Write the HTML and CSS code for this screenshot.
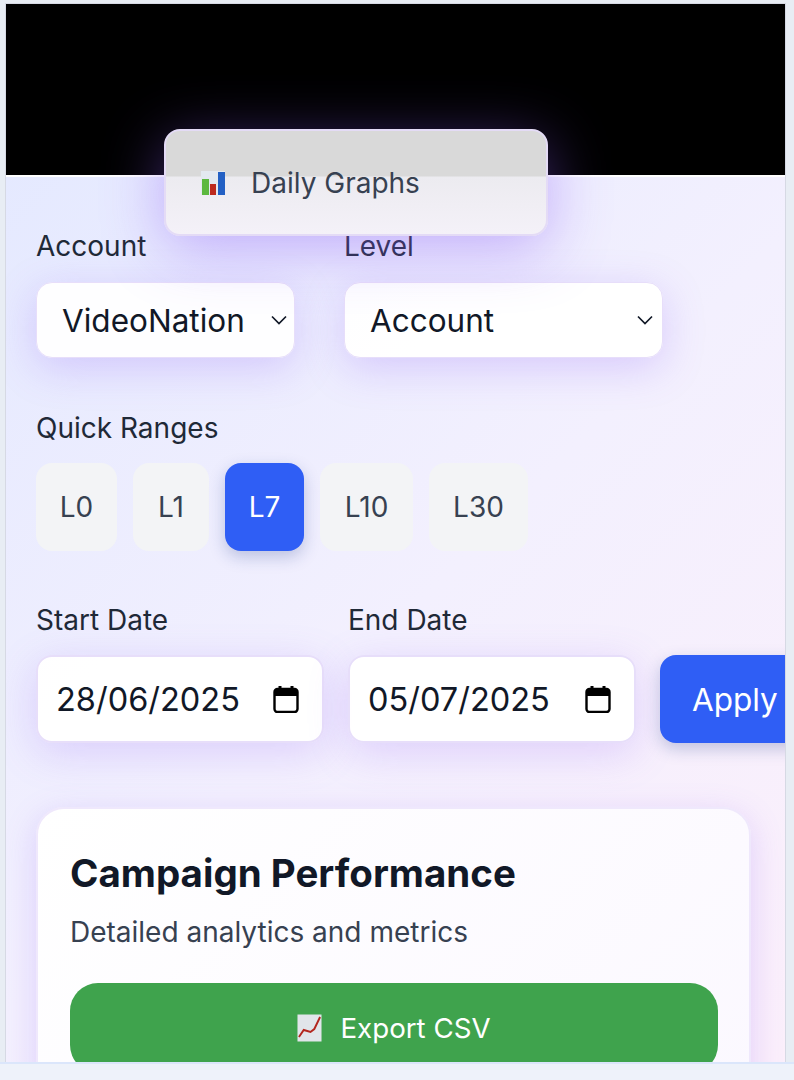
FILE: index.html
```html
<!doctype html>

<html lang="en">
<head>
  <meta charset="utf-8">
  <title>Campaign Performance</title>
  <link rel="stylesheet" href="styles.css">
</head>
<body>
<div class="frame">
  <div class="hero"></div>
  <div class="tab">
    <svg class="tab-icon" width="25" height="26" viewBox="0 0 25 26">
      <rect x="1" y="1" width="24" height="24" fill="#e3e9f0"/>
      <rect x="2" y="9" width="7" height="16" fill="#5cb83f"/>
      <rect x="10" y="14" width="6" height="11" fill="#bd2a1e"/>
      <rect x="18" y="2" width="7" height="23" fill="#2360c4"/>
    </svg>
    <span>Daily Graphs</span>
  </div>
  <div class="content">
    <div class="row row-top">
      <div class="field">
        <label class="label">Account</label>
        <div class="select select-account">
          <span>VideoNation</span>
          <svg width="18" height="10" viewBox="0 0 18 10"><path d="M2 1.5l7 7 7-7" fill="none" stroke="#111827" stroke-width="1.7"/></svg>
        </div>
      </div>
      <div class="field">
        <label class="label">Level</label>
        <div class="select select-level">
          <span>Account</span>
          <svg width="18" height="10" viewBox="0 0 18 10"><path d="M2 1.5l7 7 7-7" fill="none" stroke="#111827" stroke-width="1.7"/></svg>
        </div>
      </div>
    </div>

    <div class="ranges">
      <label class="label">Quick Ranges</label>
      <div class="range-list">
        <button class="range r0">L0</button>
        <button class="range r1">L1</button>
        <button class="range r7 active">L7</button>
        <button class="range r10">L10</button>
        <button class="range r30">L30</button>
      </div>
    </div>

    <div class="row row-dates">
      <div class="field">
        <label class="label">Start Date</label>
        <div class="date">
          <span>28/06/2025</span>
          <svg width="26" height="28" viewBox="0 0 26 28"><path d="M7 1v5M19 1v5" stroke="#000" stroke-width="3"/><rect x="1.5" y="4" width="23" height="23" rx="3" fill="#fff" stroke="#000" stroke-width="2.4"/><path d="M1.5 7a3 3 0 0 1 3-3h17a3 3 0 0 1 3 3v4h-23z" fill="#000"/></svg>
        </div>
      </div>
      <div class="field">
        <label class="label">End Date</label>
        <div class="date">
          <span>05/07/2025</span>
          <svg width="26" height="28" viewBox="0 0 26 28"><path d="M7 1v5M19 1v5" stroke="#000" stroke-width="3"/><rect x="1.5" y="4" width="23" height="23" rx="3" fill="#fff" stroke="#000" stroke-width="2.4"/><path d="M1.5 7a3 3 0 0 1 3-3h17a3 3 0 0 1 3 3v4h-23z" fill="#000"/></svg>
        </div>
      </div>
      <button class="apply">Apply</button>
    </div>

    <div class="card">
      <h2 class="card-title">Campaign Performance</h2>
      <p class="card-sub">Detailed analytics and metrics</p>
      <button class="export">
        <svg width="25" height="28" viewBox="0 0 26 28" preserveAspectRatio="none">
          <rect x="0.5" y="0.5" width="25" height="27" fill="#e1e5ea"/>
          <path d="M2 23l5-7 7 2 4-3 6-12" fill="none" stroke="#b3261e" stroke-width="2"/>
        </svg>
        <span>Export CSV</span>
      </button>
    </div>
  </div>
</div>
<div class="bottom-bar"></div>
</body>
</html>
```

FILE: styles.css
```css
* {
  box-sizing: border-box;
}

html,
body {
  height: 100%;
}

body {
  margin: 0;
  display: flex;
  flex-direction: column;
  overflow: hidden;
  background: #e8edf4;
  font-family: Inter, "Liberation Sans", sans-serif;
  color: #111827;
}

.frame {
  position: relative;
  flex: 1;
  min-height: 0;
  margin: 4px 9px 0 6px;
  overflow: hidden;
  background: linear-gradient(135deg, #e2e8ff 0%, #f3f0fe 55%, #fbeffb 100%);
  box-shadow: 0 0 0 1px #d6d9e4;
}

.hero {
  height: 173px;
  background: #000;
  border-bottom: 2px solid #fff;
}

/* floating tab over the hero edge */
.tab {
  position: absolute;
  left: 158px;
  top: 125px;
  width: 384px;
  height: 107px;
  padding-left: 34px;
  display: flex;
  align-items: center;
  gap: 26px;
  background: linear-gradient(#d9d9d9 0, #d9d9d9 45px, #ecebf0 46px, #f4f1f8 100%);
  border: 2px solid #e4dbf6;
  border-radius: 16px;
  box-shadow: 0 12px 60px rgba(139,92,246,.45);
  font-size: 28px;
  color: #374151;
}

.content {
  padding: 0 0 0 30px;
}

.row {
  display: flex;
}

.row-top {
  padding-top: 51px;
  gap: 49px;
}

.row-dates {
  margin-top: 51px;
  gap: 24px;
  align-items: flex-end;
  width: 780px;
}

.label {
  display: block;
  font-size: 28px;
  line-height: 36px;
  color: #1f2937;
}

.select {
  display: flex;
  align-items: center;
  justify-content: space-between;
  height: 76px;
  margin-top: 18px;
  background: rgba(255,255,255,.95);
  border: 1px solid #e7defa;
  border-radius: 16px;
  box-shadow: 0 10px 40px rgba(139,92,246,.25);
  font-size: 31.5px;
}

.select-account {
  width: 259px;
  padding: 0 6px 0 25px;
}

.select-level {
  width: 319px;
  padding: 0 8px 0 25px;
}

.ranges {
  margin-top: 52px;
}

.range-list {
  display: flex;
  gap: 16px;
  margin-top: 17px;
}

.range {
  height: 88px;
  padding: 0;
  border: 0;
  border-radius: 16px;
  background: #f3f4f6;
  color: #374151;
  font: inherit;
  font-size: 28px;
}

.r0 { width: 81px; }
.r1 { width: 76px; }
.r7 { width: 79px; }
.r10 { width: 93px; }
.r30 { width: 99px; }

.range.active {
  background: #2f5ef5;
  color: #fff;
  box-shadow: 0 6px 16px rgba(30,58,138,.25);
}

.date {
  display: flex;
  align-items: center;
  justify-content: space-between;
  width: 288px;
  height: 88px;
  margin-top: 17px;
  padding: 0 23px 0 18px;
  background: rgba(255,255,255,.95);
  border: 2px solid #e7defa;
  border-radius: 16px;
  box-shadow: 0 10px 40px rgba(139,92,246,.22);
  font-size: 32.5px;
}

.apply {
  width: 150px;
  height: 88px;
  padding: 0 0 0 32px;
  border: 0;
  border-radius: 16px;
  background: #2f5ef5;
  color: #fff;
  font: inherit;
  font-size: 31.5px;
  text-align: left;
  box-shadow: 0 6px 16px rgba(30,58,138,.25);
}

.card {
  width: 715px;
  height: 320px;
  margin-top: 64px;
  padding: 40px 32px 0 32px;
  background: linear-gradient(135deg, #fff, #fbf8ff);
  border: 2px solid #efe8fc;
  border-radius: 28px;
  box-shadow: 0 8px 32px rgba(139,92,246,.22);
}

.card-title {
  margin: 0;
  font-size: 38.5px;
  line-height: 48px;
  font-weight: 700;
  color: #111827;
}

.card-sub {
  margin: 17px 0 0;
  font-size: 28px;
  line-height: 36px;
  color: #374151;
}

.export {
  display: flex;
  align-items: center;
  justify-content: center;
  gap: 18px;
  width: 648px;
  height: 90px;
  margin-top: 33px;
  padding: 0;
  border: 0;
  border-radius: 28px;
  background: #3fa34d;
  color: #fff;
  font: inherit;
  font-size: 27.7px;
}

.bottom-bar {
  height: 18px;
  background: #eef2fa;
  border-top: 2px solid #dbe6fb;
  position: relative;
}
```
